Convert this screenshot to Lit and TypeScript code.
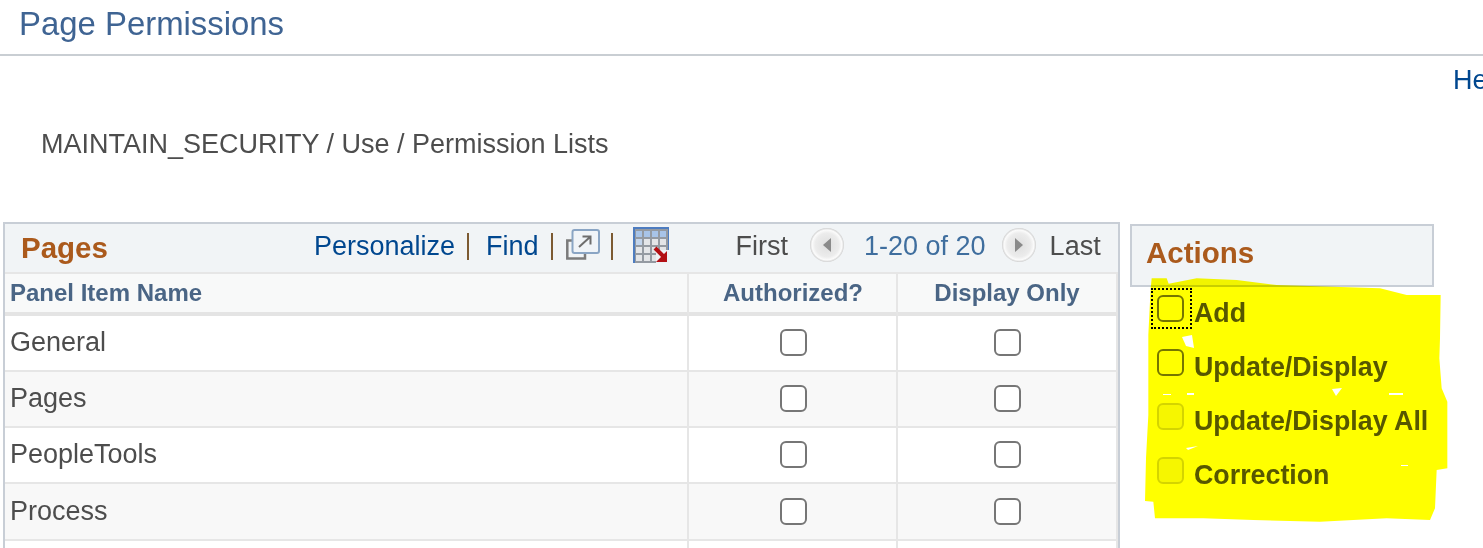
import { LitElement, html, css, svg } from "lit";
import { customElement } from "lit/decorators.js";

const ROWS = ["General", "Pages", "PeopleTools", "Process", ""];
const ACTIONS = [
  { label: "Add", focus: true, off: false },
  { label: "Update/Display", focus: false, off: false },
  { label: "Update/Display All", focus: false, off: true },
  { label: "Correction", focus: false, off: true },
];
const BLOB = [
  [95,190],[140,190],[146,206],[230,190],[350,195],[470,210],[640,215],[780,220],[860,240],[962,240],
  [960,370],[958,430],[965,520],[982,560],[982,760],[950,765],[945,880],[930,915],[800,910],[600,920],
  [400,915],[250,910],[105,910],[100,860],[75,858],[78,730],[85,600],[85,360],[92,220],
].map(([x, y]) => `${x / 3},${y / 3}`).join(" ");

@customElement("app-root")
export class AppRoot extends LitElement {
  static styles = css`
    :host { display: block; width: 1483px; height: 548px; overflow: hidden; position: relative; background: #fff;
      font-family: "Liberation Sans", Arial, sans-serif; color: #4d4d4d; }
    .title { box-sizing: border-box; padding: 4px 0 0 19px; border-bottom: 2px solid #c9ced3; height: 56px;
      font-size: 32.9px; line-height: 40px; color: #3f6493; }
    .help { margin: 7px 0 0 1453px; font-size: 27px; line-height: 34px; color: #00478f; white-space: nowrap; }
    .crumb { margin: 30px 0 0 41px; font-size: 27px; line-height: 34px; }
    .row { display: flex; align-items: flex-start; margin: 61px 0 0 3px; gap: 10px; }
    .grid { width: 1117px; box-sizing: border-box; border: 2px solid #c8ced6; border-bottom: none; flex: none; }
    .bar { height: 48px; background: #f1f4f6; display: flex; align-items: center; padding-left: 16px; box-sizing: border-box; }
    .head { font-size: 29.5px; font-weight: bold; color: #ab5a1c; }
    .tools { margin-left: 206px; display: flex; align-items: center; font-size: 27px; color: #00478f; padding-bottom: 4px; }
    .sep { width: 2px; height: 27px; background: #7c5a32; flex: none; display: block; }
    .sep1 { margin: 0 17px 0 12px; }
    .sep2 { margin: 0 13px 0 12px; }
    .sep3 { margin: 0 20px 0 11px; }
    .ico { display: block; flex: none; }
    .ico-pop { margin-top: -3px; }
    .ico-up { margin-top: -2px; }
    .nav { display: flex; align-items: center; font-size: 27px; margin-left: 67px; padding-bottom: 4px; }
    .count { color: #3f6e9e; margin: 0 16px 0 20px; }
    .nav-btn { display: block; flex: none; margin-bottom: 2px; }
    .nav-btn.prev { margin-left: 22px; }
    .last { margin-left: 14px; }
    .cols { display: grid; grid-template-columns: 684px 209px 220px; }
    .th { height: 38px; background: #f8f9f9; border-top: 2px solid #e6e6e6; border-bottom: 4px solid #e4e4e4; border-right: 2px solid #e6e6e6;
      font-size: 24px; font-weight: bold; color: #4a6585; display: flex; align-items: center; justify-content: center; }
    .th.first { justify-content: flex-start; padding-left: 5px; }
    .td { height: 54px; box-sizing: content-box; border-bottom: 2px solid #e6e6e6; border-right: 2px solid #e6e6e6; display: flex; align-items: center; justify-content: center; font-size: 27px; }
    .td > * { margin-bottom: 2px; }
    .td.first { justify-content: flex-start; padding-left: 5px; padding-bottom: 2px; height: 52px; }
    .td.tall { height: 55px; }
    .td.tall > * { margin-bottom: 0; }
    .td.first.tall { height: 55px; padding-bottom: 0; }
    .td.alt { background: #f8f8f8; }
    .c2 { padding-left: 1px; }
    input { appearance: none; -webkit-appearance: none; margin: 0; width: 27px; height: 27px; box-sizing: border-box;
      border: 2.5px solid #767676; border-radius: 6px; background: #fff; flex: none; display: block; }
    input:disabled { opacity: .5; background: #eee; border-color: #aaa; }
    .actions { width: 304px; box-sizing: border-box; flex: none; margin-top: 2px; }
    .actions .bar { height: 63px; border: 2px solid #c8ced6; padding: 0 0 6px 14px; }
    .list { display: grid; grid-template-columns: 27px auto; column-gap: 10px; justify-content: start; padding: 8px 0 0 27px; grid-auto-rows: 54px; }
    .cell { position: relative; }
    .cell.focus::after { content: ""; position: absolute; left: -6px; top: -7px; width: 41px; height: 41px; box-sizing: border-box; border: 2px dotted #000; }
    .lab { font-size: 26.8px; font-weight: bold; line-height: 30px; padding-top: 3px; color: #575757; }
    .blob { position: absolute; left: 1120px; top: 215px; width: 363px; height: 320px; mix-blend-mode: multiply; pointer-events: none; }
  `;

  private popout() {
    return html`<svg class="ico ico-pop" width="34" height="31" viewBox="0 0 34 31">
      <path d="M6 11.500H1.300V29.500H19V25" fill="none" stroke="#7b7b7b" stroke-width="2.500"/>
      <rect x="6.500" y="1" width="26.500" height="23" rx="2" fill="#f0f4f8" stroke="#8aa5c4" stroke-width="2"/>
      <path d="M13 18L24 8M16.500 7.500H24.500V15.500" fill="none" stroke="#6e6e6e" stroke-width="2"/>
    </svg>`;
  }

  private gridIcon() {
    const cells = [];
    for (let r = 0; r < 4; r++) for (let c = 0; c < 4; c++) {
      const col = r === 0 ? "#a8c4e8" : c === 0 && r === 1 ? "#c3d5ec" : "#e3e5e8";
      cells.push(svg`<rect x=${3 + c * 8} y=${4 + r * 8} width="6" height="6" fill=${col}/>`);
    }
    return html`<svg class="ico ico-up" width="36" height="36" viewBox="0 0 36 36">
      <rect width="36" height="36" fill="#4d7cc0"/><rect x="2" y="2" width="33" height="34" fill="#949aa2"/>
      ${cells}
      <rect x="23" y="23" width="13" height="13" fill="#eef1f5"/>
      <path d="M22 21L30 29" stroke="#b30f14" stroke-width="4" fill="none"/>
      <path d="M34 24V35H23z" fill="#b30f14"/>
    </svg>`;
  }

  private navBtn(dir: "l" | "r") {
    const tri = dir === "l" ? "M21 10v14l-8-7z" : "M13 10v14l8-7z";
    const id = "g" + dir;
    return html`<svg class="nav-btn ${dir === "l" ? "prev" : ""}" width="34" height="34" viewBox="0 0 34 34">
      <defs><radialGradient id=${id}><stop offset="0" stop-color="#dedede"/><stop offset=".7" stop-color="#ececec"/><stop offset=".88" stop-color="#fbfbfb"/><stop offset="1" stop-color="#cfcfcf"/></radialGradient></defs>
      <circle cx="17" cy="17" r="17" fill=${`url(#${id})`}/>
      <path d=${tri} fill="#8a8a8a"/>
    </svg>`;
  }

  render() {
    return html`
      <div class="title">Page Permissions</div>
      <div class="help">Help</div>
      <div class="crumb">MAINTAIN_SECURITY / Use / Permission Lists</div>
      <div class="row">
        <div class="grid">
          <div class="bar">
            <span class="head">Pages</span>
            <div class="tools">
              <span>Personalize</span><i class="sep sep1"></i><span>Find</span><i class="sep sep2"></i>
              ${this.popout()}<i class="sep sep3"></i>${this.gridIcon()}
            </div>
            <div class="nav">
              <span>First</span>
              ${this.navBtn("l")}
              <span class="count">1-20 of 20</span>
              ${this.navBtn("r")}<span class="last">Last</span>
            </div>
          </div>
          <div class="cols">
            <div class="th first">Panel Item Name</div><div class="th c2">Authorized?</div><div class="th">Display Only</div>
            ${ROWS.map((r, i) => {
              const c = `${i % 2 ? "alt" : ""} ${i === 3 ? "tall" : ""}`;
              return html`
              <div class="td first ${c}">${r}</div>
              <div class="td c2 ${c}"><input type="checkbox"></div>
              <div class="td ${c}"><input type="checkbox"></div>`;
            })}
          </div>
        </div>
        <div class="actions">
          <div class="bar"><span class="head">Actions</span></div>
          <div class="list">
            ${ACTIONS.map((a) => html`
              <div class="cell ${a.focus ? "focus" : ""}"><input type="checkbox" ?disabled=${a.off}></div>
              <div class="lab">${a.label}</div>`)}
          </div>
        </div>
      </div>
      <svg class="blob" viewBox="0 0 363 320"><polygon points=${BLOB} fill="#ffff00"/>
        <g fill="#fff">
          <path d="M62 122l10-2 2 13-8-2z"/><path d="M212 174l10-1-6 8z"/><path d="M66 233l12-2-10 4z"/>
          <path d="M43 179h8v1h-8z"/><path d="M67 178h7v2h-7z"/><path d="M269 178h14v2h-14z"/><path d="M281 250h7v1h-7z"/>
        </g>
      </svg>
    `;
  }
}
